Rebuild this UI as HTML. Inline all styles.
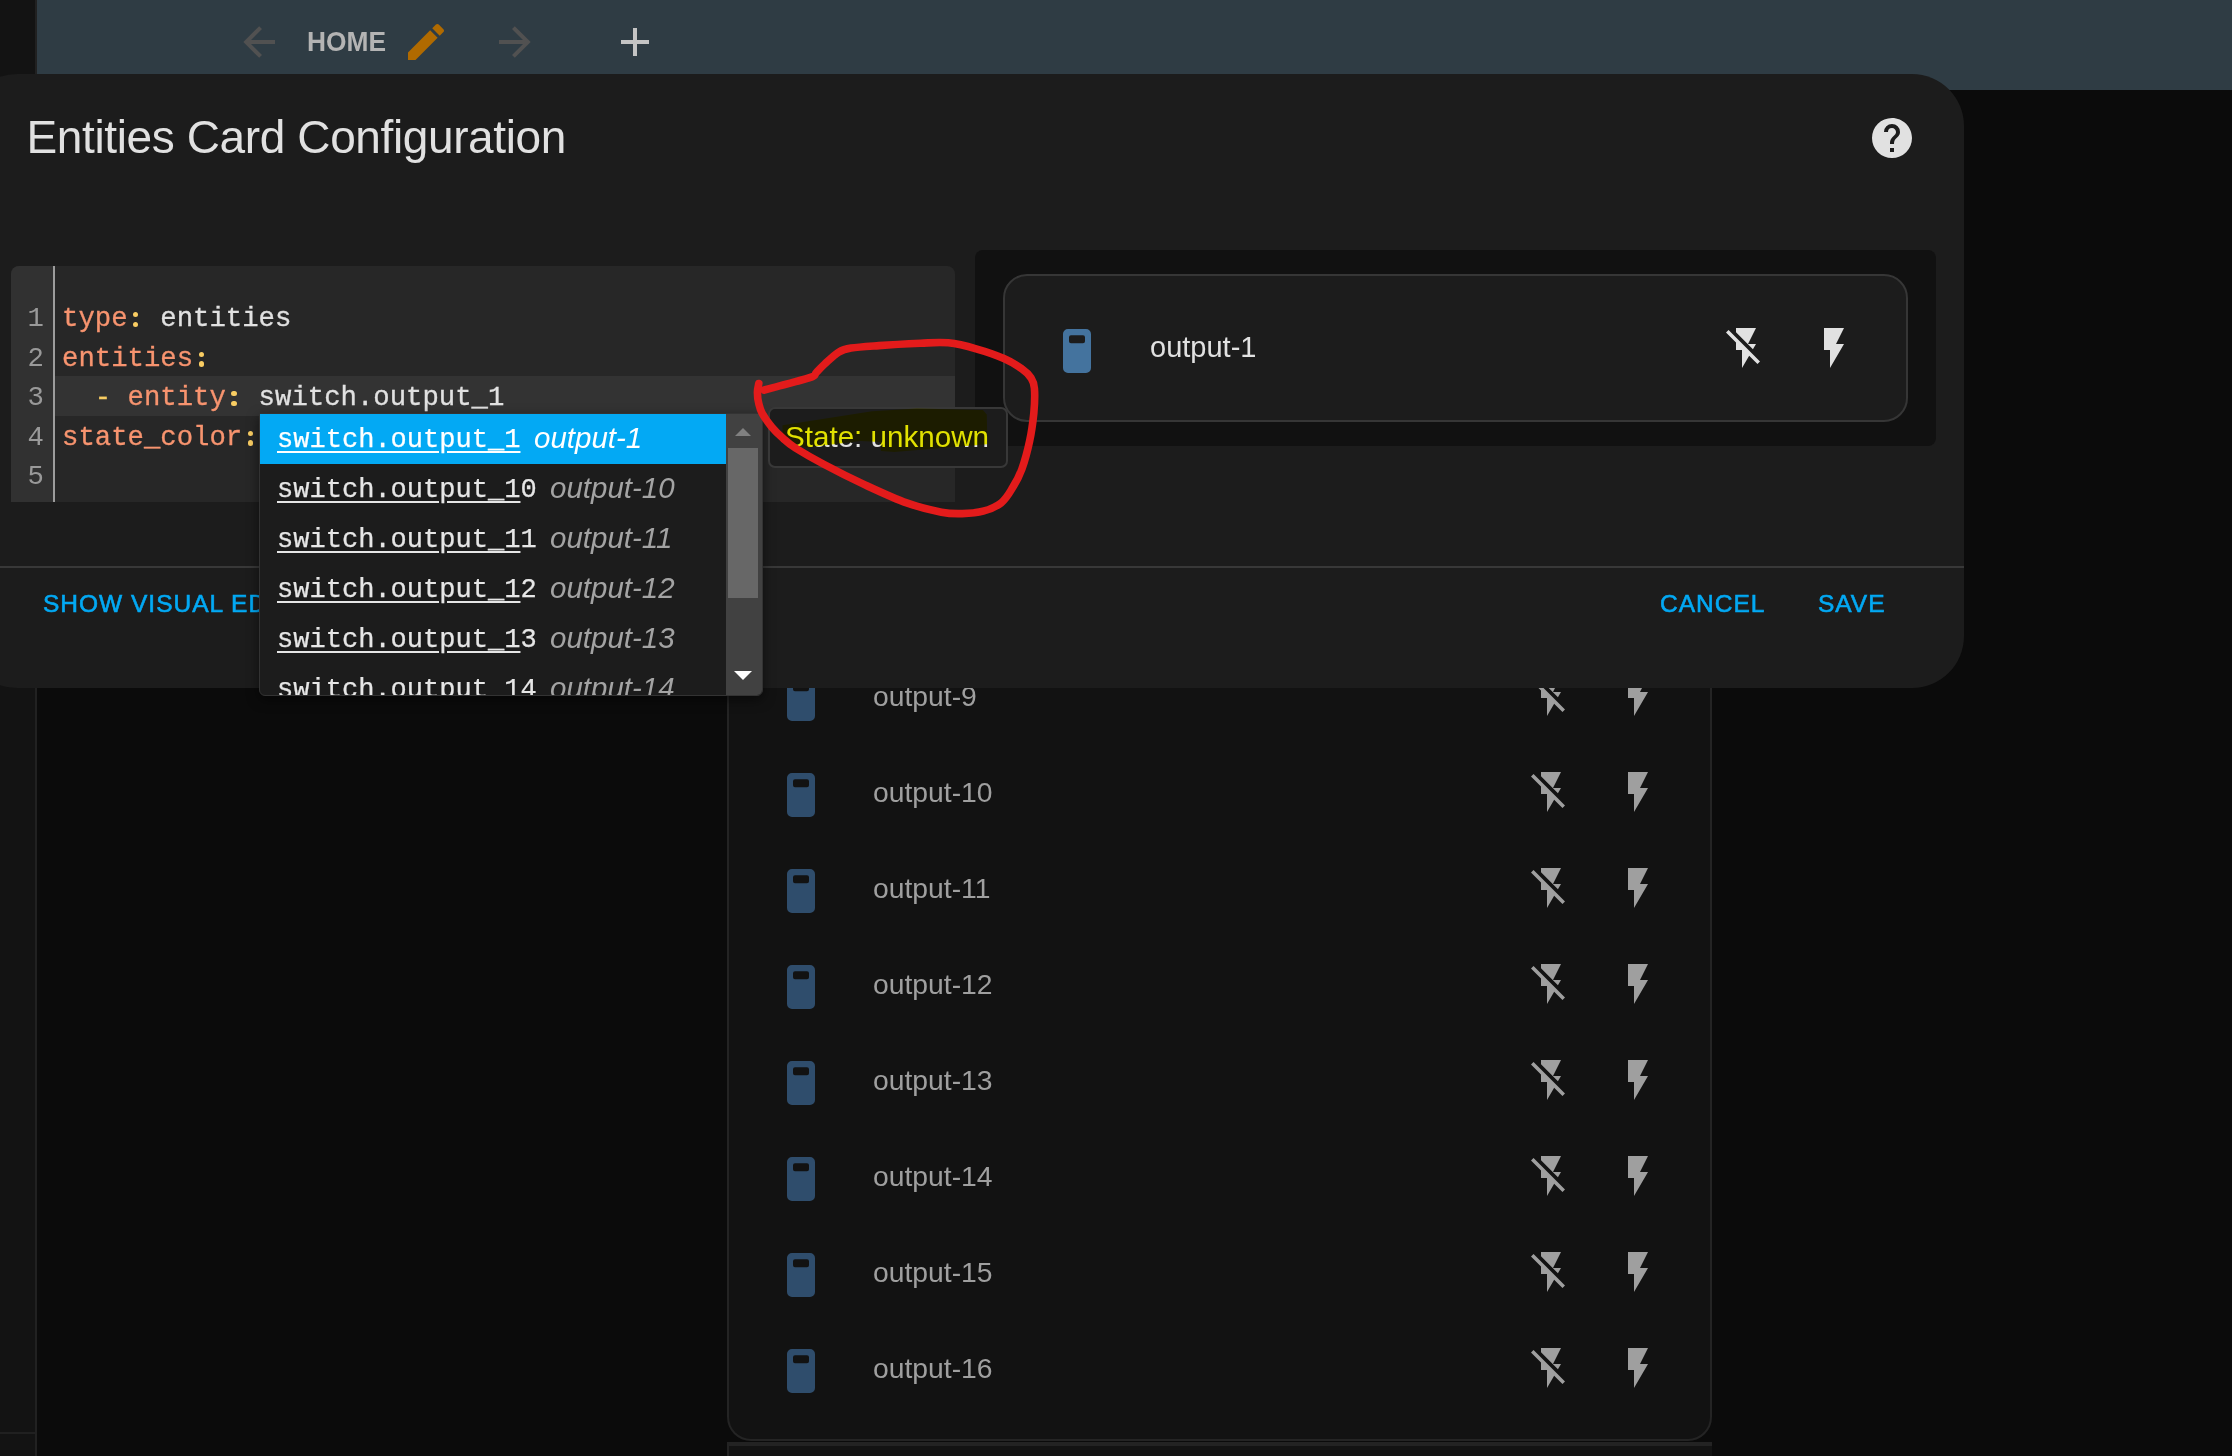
<!DOCTYPE html>
<html><head><meta charset="utf-8">
<style>
html,body{margin:0;padding:0;}
body{width:2232px;height:1456px;overflow:hidden;position:relative;background:#0b0b0b;font-family:"Liberation Sans",sans-serif;}
.abs{position:absolute;}
.mono{font-family:"Liberation Mono",monospace;}
.cl{position:relative;color:transparent;-webkit-text-stroke-width:0;--t1:9.1px;--t2:18.8px;}
.cl::before,.cl::after{content:"";position:absolute;left:50%;width:5.4px;height:5.4px;margin-left:-2.7px;border-radius:50%;background:#f9cd63;}
.cl::before{top:var(--t1);}
.cl::after{top:var(--t2);}
svg{display:block;}
</style></head>
<body>
<!-- background app -->
<div class="abs" style="left:0;top:0;width:35px;height:1456px;background:#131313;"></div>
<div class="abs" style="left:0;top:1432px;width:35px;height:2px;background:#202020;"></div>
<div class="abs" style="left:35px;top:0;width:2px;height:1456px;background:#212121;"></div>
<div class="abs" style="left:37px;top:0;width:2195px;height:90px;background:#2f3c44;"></div>

<!-- header icons -->
<svg class="abs" style="left:235px;top:18px" width="48" height="48" viewBox="0 0 24 24"><path fill="#515151" d="M20,11V13H8L13.5,18.5L12.08,19.92L4.16,12L12.08,4.08L13.5,5.5L8,11H20Z"/></svg>
<div class="abs" style="left:307px;top:22px;font-size:28px;font-weight:bold;color:#b4b4b4;line-height:40px;transform:scaleX(0.94);transform-origin:0 0;">HOME</div>
<svg class="abs" style="left:402px;top:18px" width="48" height="48" viewBox="0 0 24 24"><path fill="#b06a00" d="M20.71,7.04C21.1,6.65 21.1,6 20.71,5.63L18.37,3.29C18,2.9 17.35,2.9 16.96,3.29L15.12,5.12L18.87,8.87M3,17.25V21H6.75L17.81,9.93L14.06,6.18L3,17.25Z"/></svg>
<svg class="abs" style="left:491px;top:18px" width="48" height="48" viewBox="0 0 24 24"><path fill="#515151" d="M4,11V13H16L10.5,18.5L11.92,19.92L19.84,12L11.92,4.08L10.5,5.5L16,11H4Z"/></svg>
<svg class="abs" style="left:611px;top:18px" width="48" height="48" viewBox="0 0 24 24"><path fill="#c4c4c4" d="M19,13H13V19H11V13H5V11H11V5H13V11H19V13Z"/></svg>

<!-- background card -->
<div class="abs" style="left:727px;top:560px;width:981px;height:879px;border:2px solid #242424;border-top:none;border-radius:0 0 24px 24px;background:#121212;"></div>
<div class="abs" style="left:727px;top:1442px;width:983px;height:10px;border-top:4px solid #232323;border-left:2px solid #232323;background:#131313;"></div>
<svg class="abs" style="left:777px;top:674px" width="48" height="48" viewBox="0 0 24 24"><path fill="#2f4d6c" d="M7.5,1.5H16.5A2.5,2.5 0 0,1 19,4V21A2.5,2.5 0 0,1 16.5,23.5H7.5A2.5,2.5 0 0,1 5,21V4A2.5,2.5 0 0,1 7.5,1.5ZM9,4.6A1,1 0 0,0 8,5.6V7.6A1,1 0 0,0 9,8.6H15A1,1 0 0,0 16,7.6V5.6A1,1 0 0,0 15,4.6Z" fill-rule="evenodd"/></svg>
<div class="abs" style="left:873px;top:676px;font-size:28.3px;color:#9f9f9f;line-height:40px;">output-9</div>
<svg class="abs" style="left:1527px;top:672px" width="48" height="48" viewBox="0 0 24 24"><path fill="#9f9f9f" d="M17,10H13L17,2H7V4.18L15.46,12.64M3.27,3L2,4.27L7,9.27V13H10V22L13.58,15.86L17.73,20L19,18.73L3.27,3Z"/></svg>
<svg class="abs" style="left:1614px;top:672px" width="48" height="48" viewBox="0 0 24 24"><path fill="#9f9f9f" d="M7,2V13H10V22L17,10H13L17,2H7Z"/></svg>
<svg class="abs" style="left:777px;top:770px" width="48" height="48" viewBox="0 0 24 24"><path fill="#2f4d6c" d="M7.5,1.5H16.5A2.5,2.5 0 0,1 19,4V21A2.5,2.5 0 0,1 16.5,23.5H7.5A2.5,2.5 0 0,1 5,21V4A2.5,2.5 0 0,1 7.5,1.5ZM9,4.6A1,1 0 0,0 8,5.6V7.6A1,1 0 0,0 9,8.6H15A1,1 0 0,0 16,7.6V5.6A1,1 0 0,0 15,4.6Z" fill-rule="evenodd"/></svg>
<div class="abs" style="left:873px;top:772px;font-size:28.3px;color:#9f9f9f;line-height:40px;">output-10</div>
<svg class="abs" style="left:1527px;top:768px" width="48" height="48" viewBox="0 0 24 24"><path fill="#9f9f9f" d="M17,10H13L17,2H7V4.18L15.46,12.64M3.27,3L2,4.27L7,9.27V13H10V22L13.58,15.86L17.73,20L19,18.73L3.27,3Z"/></svg>
<svg class="abs" style="left:1614px;top:768px" width="48" height="48" viewBox="0 0 24 24"><path fill="#9f9f9f" d="M7,2V13H10V22L17,10H13L17,2H7Z"/></svg>
<svg class="abs" style="left:777px;top:866px" width="48" height="48" viewBox="0 0 24 24"><path fill="#2f4d6c" d="M7.5,1.5H16.5A2.5,2.5 0 0,1 19,4V21A2.5,2.5 0 0,1 16.5,23.5H7.5A2.5,2.5 0 0,1 5,21V4A2.5,2.5 0 0,1 7.5,1.5ZM9,4.6A1,1 0 0,0 8,5.6V7.6A1,1 0 0,0 9,8.6H15A1,1 0 0,0 16,7.6V5.6A1,1 0 0,0 15,4.6Z" fill-rule="evenodd"/></svg>
<div class="abs" style="left:873px;top:868px;font-size:28.3px;color:#9f9f9f;line-height:40px;">output-11</div>
<svg class="abs" style="left:1527px;top:864px" width="48" height="48" viewBox="0 0 24 24"><path fill="#9f9f9f" d="M17,10H13L17,2H7V4.18L15.46,12.64M3.27,3L2,4.27L7,9.27V13H10V22L13.58,15.86L17.73,20L19,18.73L3.27,3Z"/></svg>
<svg class="abs" style="left:1614px;top:864px" width="48" height="48" viewBox="0 0 24 24"><path fill="#9f9f9f" d="M7,2V13H10V22L17,10H13L17,2H7Z"/></svg>
<svg class="abs" style="left:777px;top:962px" width="48" height="48" viewBox="0 0 24 24"><path fill="#2f4d6c" d="M7.5,1.5H16.5A2.5,2.5 0 0,1 19,4V21A2.5,2.5 0 0,1 16.5,23.5H7.5A2.5,2.5 0 0,1 5,21V4A2.5,2.5 0 0,1 7.5,1.5ZM9,4.6A1,1 0 0,0 8,5.6V7.6A1,1 0 0,0 9,8.6H15A1,1 0 0,0 16,7.6V5.6A1,1 0 0,0 15,4.6Z" fill-rule="evenodd"/></svg>
<div class="abs" style="left:873px;top:964px;font-size:28.3px;color:#9f9f9f;line-height:40px;">output-12</div>
<svg class="abs" style="left:1527px;top:960px" width="48" height="48" viewBox="0 0 24 24"><path fill="#9f9f9f" d="M17,10H13L17,2H7V4.18L15.46,12.64M3.27,3L2,4.27L7,9.27V13H10V22L13.58,15.86L17.73,20L19,18.73L3.27,3Z"/></svg>
<svg class="abs" style="left:1614px;top:960px" width="48" height="48" viewBox="0 0 24 24"><path fill="#9f9f9f" d="M7,2V13H10V22L17,10H13L17,2H7Z"/></svg>
<svg class="abs" style="left:777px;top:1058px" width="48" height="48" viewBox="0 0 24 24"><path fill="#2f4d6c" d="M7.5,1.5H16.5A2.5,2.5 0 0,1 19,4V21A2.5,2.5 0 0,1 16.5,23.5H7.5A2.5,2.5 0 0,1 5,21V4A2.5,2.5 0 0,1 7.5,1.5ZM9,4.6A1,1 0 0,0 8,5.6V7.6A1,1 0 0,0 9,8.6H15A1,1 0 0,0 16,7.6V5.6A1,1 0 0,0 15,4.6Z" fill-rule="evenodd"/></svg>
<div class="abs" style="left:873px;top:1060px;font-size:28.3px;color:#9f9f9f;line-height:40px;">output-13</div>
<svg class="abs" style="left:1527px;top:1056px" width="48" height="48" viewBox="0 0 24 24"><path fill="#9f9f9f" d="M17,10H13L17,2H7V4.18L15.46,12.64M3.27,3L2,4.27L7,9.27V13H10V22L13.58,15.86L17.73,20L19,18.73L3.27,3Z"/></svg>
<svg class="abs" style="left:1614px;top:1056px" width="48" height="48" viewBox="0 0 24 24"><path fill="#9f9f9f" d="M7,2V13H10V22L17,10H13L17,2H7Z"/></svg>
<svg class="abs" style="left:777px;top:1154px" width="48" height="48" viewBox="0 0 24 24"><path fill="#2f4d6c" d="M7.5,1.5H16.5A2.5,2.5 0 0,1 19,4V21A2.5,2.5 0 0,1 16.5,23.5H7.5A2.5,2.5 0 0,1 5,21V4A2.5,2.5 0 0,1 7.5,1.5ZM9,4.6A1,1 0 0,0 8,5.6V7.6A1,1 0 0,0 9,8.6H15A1,1 0 0,0 16,7.6V5.6A1,1 0 0,0 15,4.6Z" fill-rule="evenodd"/></svg>
<div class="abs" style="left:873px;top:1156px;font-size:28.3px;color:#9f9f9f;line-height:40px;">output-14</div>
<svg class="abs" style="left:1527px;top:1152px" width="48" height="48" viewBox="0 0 24 24"><path fill="#9f9f9f" d="M17,10H13L17,2H7V4.18L15.46,12.64M3.27,3L2,4.27L7,9.27V13H10V22L13.58,15.86L17.73,20L19,18.73L3.27,3Z"/></svg>
<svg class="abs" style="left:1614px;top:1152px" width="48" height="48" viewBox="0 0 24 24"><path fill="#9f9f9f" d="M7,2V13H10V22L17,10H13L17,2H7Z"/></svg>
<svg class="abs" style="left:777px;top:1250px" width="48" height="48" viewBox="0 0 24 24"><path fill="#2f4d6c" d="M7.5,1.5H16.5A2.5,2.5 0 0,1 19,4V21A2.5,2.5 0 0,1 16.5,23.5H7.5A2.5,2.5 0 0,1 5,21V4A2.5,2.5 0 0,1 7.5,1.5ZM9,4.6A1,1 0 0,0 8,5.6V7.6A1,1 0 0,0 9,8.6H15A1,1 0 0,0 16,7.6V5.6A1,1 0 0,0 15,4.6Z" fill-rule="evenodd"/></svg>
<div class="abs" style="left:873px;top:1252px;font-size:28.3px;color:#9f9f9f;line-height:40px;">output-15</div>
<svg class="abs" style="left:1527px;top:1248px" width="48" height="48" viewBox="0 0 24 24"><path fill="#9f9f9f" d="M17,10H13L17,2H7V4.18L15.46,12.64M3.27,3L2,4.27L7,9.27V13H10V22L13.58,15.86L17.73,20L19,18.73L3.27,3Z"/></svg>
<svg class="abs" style="left:1614px;top:1248px" width="48" height="48" viewBox="0 0 24 24"><path fill="#9f9f9f" d="M7,2V13H10V22L17,10H13L17,2H7Z"/></svg>
<svg class="abs" style="left:777px;top:1346px" width="48" height="48" viewBox="0 0 24 24"><path fill="#2f4d6c" d="M7.5,1.5H16.5A2.5,2.5 0 0,1 19,4V21A2.5,2.5 0 0,1 16.5,23.5H7.5A2.5,2.5 0 0,1 5,21V4A2.5,2.5 0 0,1 7.5,1.5ZM9,4.6A1,1 0 0,0 8,5.6V7.6A1,1 0 0,0 9,8.6H15A1,1 0 0,0 16,7.6V5.6A1,1 0 0,0 15,4.6Z" fill-rule="evenodd"/></svg>
<div class="abs" style="left:873px;top:1348px;font-size:28.3px;color:#9f9f9f;line-height:40px;">output-16</div>
<svg class="abs" style="left:1527px;top:1344px" width="48" height="48" viewBox="0 0 24 24"><path fill="#9f9f9f" d="M17,10H13L17,2H7V4.18L15.46,12.64M3.27,3L2,4.27L7,9.27V13H10V22L13.58,15.86L17.73,20L19,18.73L3.27,3Z"/></svg>
<svg class="abs" style="left:1614px;top:1344px" width="48" height="48" viewBox="0 0 24 24"><path fill="#9f9f9f" d="M7,2V13H10V22L17,10H13L17,2H7Z"/></svg>

<!-- dialog -->
<div class="abs" style="left:-35px;top:74px;width:1999px;height:614px;background:#1c1c1c;border-radius:52px;"></div>
<div class="abs" style="left:26.5px;top:107px;font-size:46px;color:#e1e1e1;line-height:60px;letter-spacing:-0.38px;">Entities Card Configuration</div>
<svg class="abs" style="left:1868px;top:114px" width="48" height="48" viewBox="0 0 24 24"><path fill="#e1e1e1" d="M15.07,11.25L14.17,12.17C13.45,12.89 13,13.5 13,15H11V14.5C11,13.39 11.45,12.39 12.17,11.67L13.41,10.41C13.78,10.05 14,9.55 14,9C14,7.89 13.1,7 12,7A2,2 0 0,0 10,9H8A4,4 0 0,1 12,5A4,4 0 0,1 16,9C16,9.88 15.64,10.67 15.07,11.25M13,19H11V17H13M12,2A10,10 0 0,0 2,12A10,10 0 0,0 12,22A10,10 0 0,0 22,12C22,6.47 17.5,2 12,2Z"/></svg>

<!-- editor -->
<div class="abs" style="left:11px;top:266px;width:944px;height:236px;background:#272727;border-radius:8px 8px 0 0;overflow:hidden;">
  <div class="abs" style="left:0;top:0;width:42px;height:236px;background:#313131;"></div>
  <div class="abs" style="left:42px;top:0;width:2px;height:236px;background:#9c9c9c;"></div>
  <div class="abs" style="left:44px;top:110px;width:900px;height:40px;background:#333333;"></div>
</div>
<div class="abs mono" style="left:11px;top:299px;width:944px;font-size:27.3px;line-height:39.5px;">
<div class="abs" style="left:0;top:0;width:33px;text-align:right;color:#999999;">1<br>2<br>3<br>4<br>5</div>
<div class="abs" style="left:51px;top:0;white-space:pre;color:#e1e1e1;-webkit-text-stroke-width:0.3px;"><span style="color:#f7946f">type</span><span class="cl">:</span> entities
<span style="color:#f7946f">entities</span><span class="cl">:</span>
  <span style="color:#f9cd63">-</span> <span style="color:#f7946f">entity</span><span class="cl">:</span> switch.output_1
<span style="color:#f7946f">state_color</span><span class="cl">:</span>
</div>
</div>

<!-- preview -->
<div class="abs" style="left:975px;top:250px;width:961px;height:196px;background:#111111;border-radius:8px;"></div>
<div class="abs" style="left:1003px;top:274px;width:901px;height:144px;border:2px solid #363636;border-radius:24px;background:#1c1c1c;"></div>

<!-- footer -->
<div class="abs" style="left:43px;top:586px;font-size:24.5px;color:#03a9f4;line-height:36px;letter-spacing:1.0px;white-space:nowrap;-webkit-text-stroke:0.6px #03a9f4;">SHOW VISUAL EDITOR</div>
<div class="abs" style="left:1660px;top:586px;font-size:24.5px;color:#03a9f4;line-height:36px;letter-spacing:1.0px;white-space:nowrap;-webkit-text-stroke:0.6px #03a9f4;">CANCEL</div>
<div class="abs" style="left:1818px;top:586px;font-size:24.5px;color:#03a9f4;line-height:36px;letter-spacing:1.0px;white-space:nowrap;-webkit-text-stroke:0.6px #03a9f4;">SAVE</div>
<div class="abs" style="left:0;top:566px;width:1964px;height:2px;background:#383838;"></div>

<svg class="abs" style="left:1053px;top:326px" width="48" height="48" viewBox="0 0 24 24"><path fill="#44739e" fill-rule="evenodd" d="M7.5,1.5H16.5A2.5,2.5 0 0,1 19,4V21A2.5,2.5 0 0,1 16.5,23.5H7.5A2.5,2.5 0 0,1 5,21V4A2.5,2.5 0 0,1 7.5,1.5ZM9,4.6A1,1 0 0,0 8,5.6V7.6A1,1 0 0,0 9,8.6H15A1,1 0 0,0 16,7.6V5.6A1,1 0 0,0 15,4.6Z"/></svg>
<div class="abs" style="left:1150px;top:327px;font-size:29px;color:#e1e1e1;line-height:40px;">output-1</div>
<svg class="abs" style="left:1722px;top:324px" width="48" height="48" viewBox="0 0 24 24"><path fill="#e1e1e1" d="M17,10H13L17,2H7V4.18L15.46,12.64M3.27,3L2,4.27L7,9.27V13H10V22L13.58,15.86L17.73,20L19,18.73L3.27,3Z"/></svg>
<svg class="abs" style="left:1810px;top:324px" width="48" height="48" viewBox="0 0 24 24"><path fill="#e1e1e1" d="M7,2V13H10V22L17,10H13L17,2H7Z"/></svg>
<div class="abs" style="left:259px;top:413px;width:502px;height:281px;background:#1c1c1c;border:1px solid #333;border-radius:0 0 6px 6px;overflow:hidden;box-shadow:0 4px 12px rgba(0,0,0,0.5);">
<div class="abs" style="left:0;top:0;width:466px;height:282px;overflow:hidden;"><div class="abs" style="left:0;top:0px;width:466px;height:50px;background:#03a9f4;"><div class="abs mono" style="left:17px;top:6px;font-size:27.05px;line-height:40px;color:#ffffff;white-space:pre;-webkit-text-stroke-width:0.25px;"><span style="text-decoration:underline;text-underline-offset:4px;">switch.output_1</span></div><div class="abs" style="left:274px;top:4px;font-size:29.5px;font-style:italic;color:#ffffff;line-height:40px;white-space:pre;">output-1</div></div>
<div class="abs" style="left:0;top:50px;width:466px;height:50px;"><div class="abs mono" style="left:17px;top:6px;font-size:27.05px;line-height:40px;color:#e6e6e6;white-space:pre;-webkit-text-stroke-width:0.25px;"><span style="text-decoration:underline;text-underline-offset:4px;">switch.output_1</span>0</div><div class="abs" style="left:290px;top:4px;font-size:29.5px;font-style:italic;color:#a3a3a3;line-height:40px;white-space:pre;">output-10</div></div>
<div class="abs" style="left:0;top:100px;width:466px;height:50px;"><div class="abs mono" style="left:17px;top:6px;font-size:27.05px;line-height:40px;color:#e6e6e6;white-space:pre;-webkit-text-stroke-width:0.25px;"><span style="text-decoration:underline;text-underline-offset:4px;">switch.output_1</span>1</div><div class="abs" style="left:290px;top:4px;font-size:29.5px;font-style:italic;color:#a3a3a3;line-height:40px;white-space:pre;">output-11</div></div>
<div class="abs" style="left:0;top:150px;width:466px;height:50px;"><div class="abs mono" style="left:17px;top:6px;font-size:27.05px;line-height:40px;color:#e6e6e6;white-space:pre;-webkit-text-stroke-width:0.25px;"><span style="text-decoration:underline;text-underline-offset:4px;">switch.output_1</span>2</div><div class="abs" style="left:290px;top:4px;font-size:29.5px;font-style:italic;color:#a3a3a3;line-height:40px;white-space:pre;">output-12</div></div>
<div class="abs" style="left:0;top:200px;width:466px;height:50px;"><div class="abs mono" style="left:17px;top:6px;font-size:27.05px;line-height:40px;color:#e6e6e6;white-space:pre;-webkit-text-stroke-width:0.25px;"><span style="text-decoration:underline;text-underline-offset:4px;">switch.output_1</span>3</div><div class="abs" style="left:290px;top:4px;font-size:29.5px;font-style:italic;color:#a3a3a3;line-height:40px;white-space:pre;">output-13</div></div>
<div class="abs" style="left:0;top:250px;width:466px;height:50px;"><div class="abs mono" style="left:17px;top:6px;font-size:27.05px;line-height:40px;color:#e6e6e6;white-space:pre;-webkit-text-stroke-width:0.25px;"><span style="text-decoration:underline;text-underline-offset:4px;">switch.output_1</span>4</div><div class="abs" style="left:290px;top:4px;font-size:29.5px;font-style:italic;color:#a3a3a3;line-height:40px;white-space:pre;">output-14</div></div></div>
<div class="abs" style="left:466px;top:0;width:36px;height:282px;background:#414141;"></div>
<div class="abs" style="left:468px;top:34px;width:30px;height:150px;background:#676767;"></div>
<div class="abs" style="left:475px;top:14px;width:0;height:0;border-left:8px solid transparent;border-right:8px solid transparent;border-bottom:8px solid #808080;"></div>
<div class="abs" style="left:474px;top:257px;width:0;height:0;border-left:9px solid transparent;border-right:9px solid transparent;border-top:9px solid #ffffff;"></div>
</div>
<div class="abs" style="left:768px;top:407px;width:236px;height:57px;background:#1c1c1c;border:2px solid #383838;border-radius:7px;"></div>
<div class="abs" style="left:785px;top:417px;font-size:29.6px;color:#e1e1e1;line-height:40px;white-space:nowrap;">State: unknown</div>
<svg class="abs" style="left:0;top:0;mix-blend-mode:multiply" width="2232" height="700"><polygon fill="#ffff00" points="782.4,425.2 872,411.2 916.8,408.4 982.9,410 986.8,414.6 987.4,444.2 939.2,448.2 894.4,452.1 881,451 880.4,442 860.8,440.9 807,447.6 793.6,444.8 783,441.4"/></svg>
<svg class="abs" style="left:0;top:0" width="2232" height="700"><path fill="none" stroke="#e31b1b" stroke-width="7.6" stroke-linecap="round" stroke-linejoin="round" d="M758.8,383.5 C758.5,385.0 757.4,389.1 757.4,392.5 C757.4,395.9 757.9,400.1 758.8,403.6 C759.6,407.1 760.0,409.4 762.2,413.3 C764.4,417.3 768.5,423.1 771.9,427.2 C775.4,431.4 779.1,434.9 783.1,438.3 C787.0,441.8 788.8,443.8 795.6,448.1 C802.3,452.3 811.8,457.9 823.3,464.0 C834.9,470.2 851.1,478.4 865.0,484.9 C878.9,491.3 893.9,498.4 906.7,502.9 C919.4,507.5 932.1,510.4 941.4,512.2 C950.6,514.0 955.3,513.8 962.2,513.6 C969.2,513.4 976.6,513.0 983.1,511.2 C989.5,509.5 996.2,506.7 1001.1,502.9 C1006.0,499.1 1008.8,494.0 1012.2,488.3 C1015.7,482.7 1019.1,476.8 1021.9,468.9 C1024.8,461.0 1027.6,450.4 1029.6,441.1 C1031.6,431.9 1032.9,422.1 1033.8,413.3 C1034.6,404.5 1034.9,394.2 1034.4,388.3 C1034.0,382.4 1033.1,381.2 1031.0,377.9 C1028.9,374.7 1026.5,372.1 1021.9,368.9 C1017.4,365.6 1011.5,361.8 1003.9,358.5 C996.2,355.1 985.4,351.4 976.1,348.8 C966.9,346.1 957.6,343.7 948.3,342.8 C939.1,341.9 932.1,342.7 920.6,343.2 C909.0,343.7 890.5,344.7 878.9,345.6 C867.3,346.4 857.8,346.9 851.1,348.1 C844.4,349.2 843.0,349.6 838.6,352.2 C834.2,354.9 828.4,360.7 824.7,364.0 C821.0,367.4 818.4,370.3 816.4,372.4 C814.4,374.4 816.4,375.0 812.9,376.5 C809.4,378.1 801.7,379.9 795.6,381.7 C789.4,383.4 781.3,385.6 776.1,386.9 C770.9,388.3 766.3,389.5 764.3,390.0"/></svg>
</body></html>
